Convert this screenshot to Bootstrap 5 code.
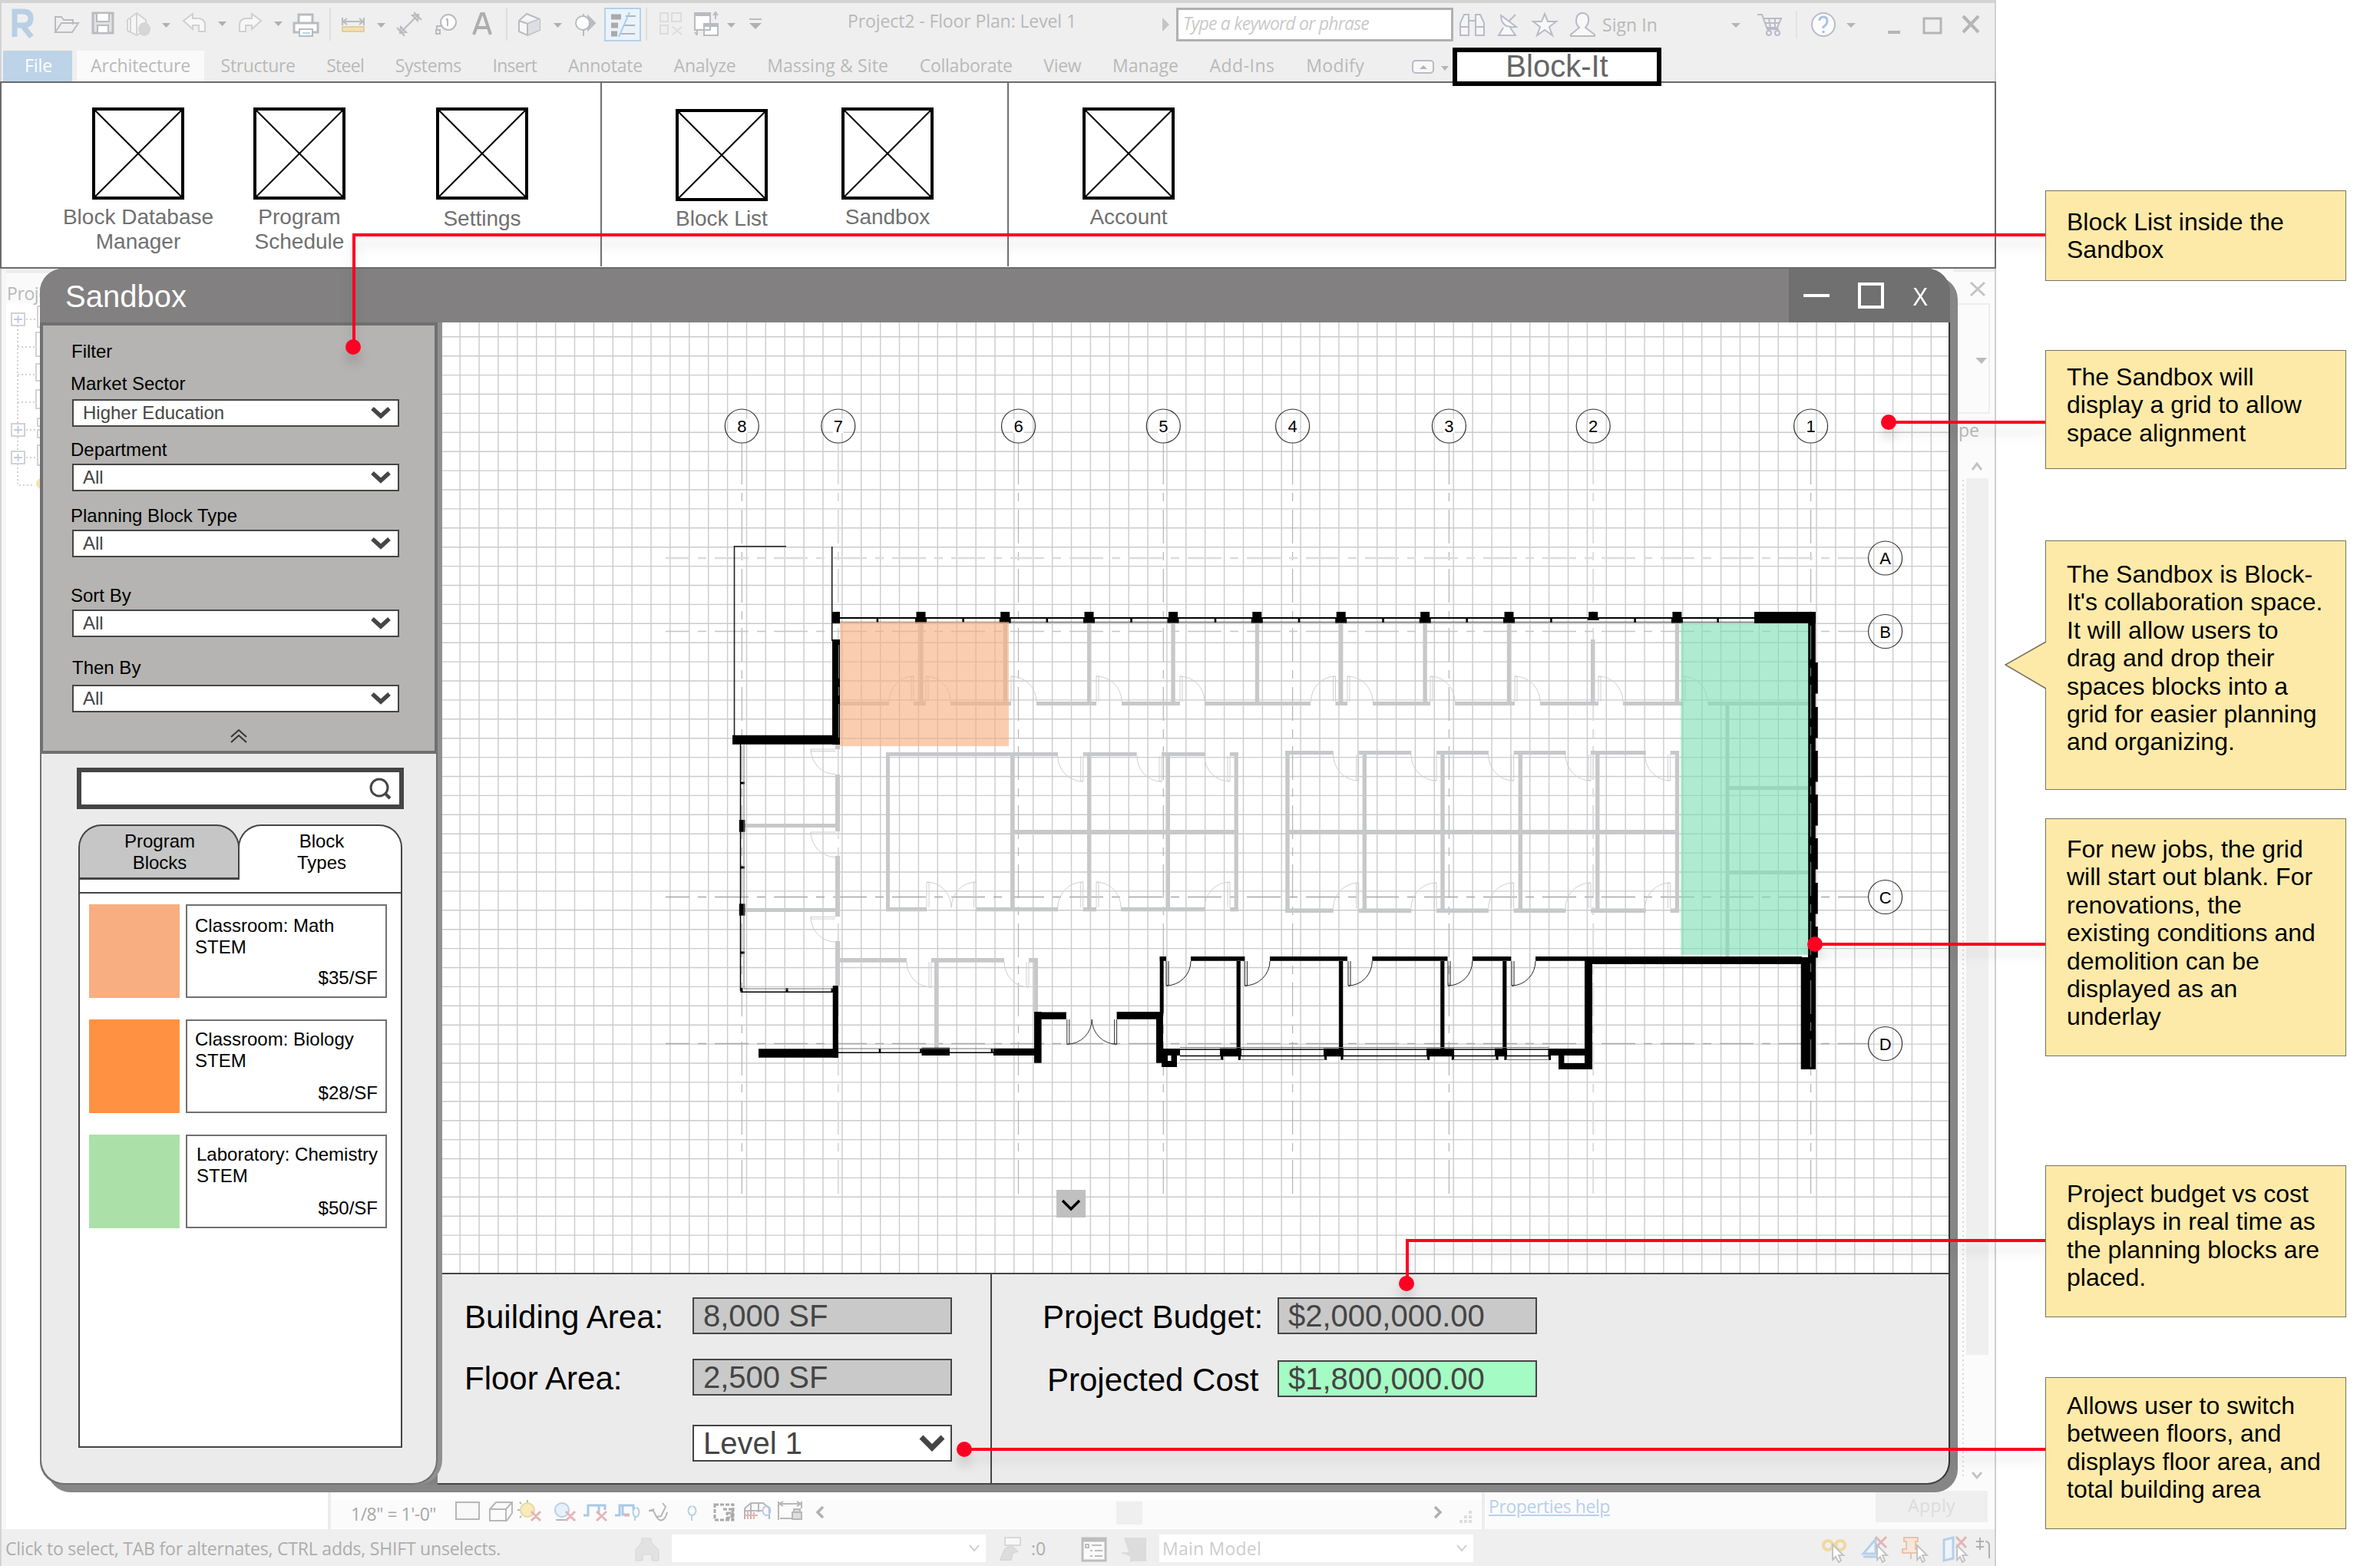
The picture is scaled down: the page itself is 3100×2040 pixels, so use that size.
<!DOCTYPE html>
<html lang="en">
<head>
<meta charset="utf-8">
<title>Block-It Sandbox</title>
<link href="https://cdn.jsdelivr.net/npm/bootstrap@5.3.0/dist/css/bootstrap.min.css" rel="stylesheet">
<script src="https://cdn.jsdelivr.net/npm/bootstrap@5.3.0/dist/js/bootstrap.bundle.min.js"></script>
<style>
  html, body { margin: 0; background: #fff; }
  body { font-family: "Liberation Sans", Arial, sans-serif; color: #000; overflow: hidden; }
  svg { display: block; flex: none; }
  .stage { width: 3100px; height: 2040px; overflow: hidden; }
  .host { width: 2600px; height: 2040px; background: #efefef; border-top: 4px solid #d3d3d3; border-left: 2px solid #d3d3d3; border-right: 2px solid #cfcfcf; font-family: "Open Sans", "Noto Sans", sans-serif; color: #b9b9b9; font-size: 23px; }
  .host .fit { display: block; flex: none; white-space: nowrap; }
  .quick { height: 62px; }
  .help-search { width: 361px; height: 44px; border: 3px solid #b0b0b0; background: #fff; margin: 6px 0 0 9px; padding-left: 6px; color: #cacaca; }
  .tabs-row { height: 40px; gap: 40.6px; padding-left: 2px; }
  .tabs-row .fit { line-height: 38px; height: 40px; }
  .file-tab { width: 90px; background: #bdd3e7; color: #fff; padding-left: 28px; height: 40px; }
  .arch-tab { width: 166px; background: #fafafa; padding-left: 18px; height: 40px; margin-left: 6px; }
  .ribbon { height: 244px; margin-left: -2px; margin-right: -2px; background: #fff; border: 2px solid #6b6b6b; border-top-width: 2px; font-family: "Liberation Sans", Arial, sans-serif; font-size: 28px; line-height: 32px; color: #707070; text-align: center; }
  .panel-group { border-right: 2px solid #707070; height: 239px; }
  .tool { width: 210px; padding-top: 32px; flex: none; }
  .tool svg { margin: 0 auto 7px; }
  .tool.low { padding-top: 34px; }
  .tool.label-low svg { margin-bottom: 9px; }
  .browser { width: 429px; background: #fff; border-left: 6px solid #f7f7f7; border-right: 4px solid #ececec; }
  .browser-head { height: 45px; background: #fafafa; padding: 10px 0 0 1px; border-top: 6px solid #ededed; line-height: 32px; letter-spacing: -.4px; }
  .view-bar { height: 36px; margin-bottom: 2px; background: #fbfbfb; color: #a8a8a8; }
  .props { width: 668px; background: #fbfbfb; border-left: 4px solid #ededed; }
  .apply-btn { width: 146px; height: 41px; background: #efefef; color: #dcdcdc; line-height: 39px; padding-left: 42px; }
  .status { height: 48px; color: #adadad; padding-top: 2px; }
  .status-input { height: 36px; background: #fff; color: #cdcdcd; }

  .brand-tab { left: 1892px; top: 62px; width: 272px; height: 50px; border: 6px solid #000; background: #fff; color: #666; font-size: 40px; line-height: 37px; }
  .win { left: 52px; top: 350px; width: 2488px; height: 1584px; border-radius: 30px; box-shadow: 10px 10px 0 #868686; background: #828080; }
  .win-title { height: 70px; background: #828080; color: #fff; font-size: 40px; line-height: 62px; padding-left: 33px; border-radius: 30px 30px 0 0; overflow: hidden; }
  .win-btns { width: 210px; height: 70px; background: #707070; font-size: 34px; }
  .win-x { width: 60px; padding-left: 17px; padding-top: 2px; font-size: 34px; line-height: 68px; }
  .win-x span { display: inline-block; transform: scaleX(.88); }
  .side { width: 518px; background: #ebebeb; border: 2px solid #707070; border-top: 0; border-radius: 0 0 32px 32px; box-shadow: 6px 0 0 #909090; z-index: 2; }
  .filters { height: 562px; margin: 0 -2px; background: #b5b4b2; border: 4px solid #707070; padding: 20px 0 0 38px; font-size: 24px; line-height: 28px; }
  .filters .lbl { height: 28px; margin-left: -2px; }
  .pick { width: 426px; height: 36px; border: 2px solid #454545; background: #fff; color: #454545; padding: 0 9px 0 12px; font-size: 24px; }
  .find { width: 426px; height: 54px; border: 6px solid #454545; background: #fff; margin: 18px 0 0 46px; }
  .lib { width: 422px; height: 812px; margin: 20px 0 0 48px; font-size: 24px; line-height: 28px; }
  .lib-tab { height: 72px; text-align: center; border: 2px solid #454545; border-radius: 30px 30px 0 0; padding: 6px 0 0 2px; }
  .lib-tab.off { width: 210px; background: #c6c6c6; border-bottom-width: 3px; }
  .lib-tab.on { width: 214px; margin-left: -2px; background: #fff; border-bottom: 0; padding-left: 4px; }
  .lib-tabs { background: linear-gradient(#ebebeb 36px, #fff 36px); }
  .lib-gap { height: 18px; border: 2px solid #454545; border-top: 0; background: #fff; }
  .lib-body { flex: 1; background: #fff; border: 2px solid #454545; border-top: 0; padding: 14px 0 0 12px; }
  .block-row { height: 122px; margin-bottom: 28px; gap: 8px; }
  .swatch { width: 118px; height: 122px; }
  .block-info { width: 262px; height: 122px; border: 2px solid #707070; padding: 10px 10px 0 10px; white-space: nowrap; }
  .block-info .price { text-align: right; margin-top: 14px; }
  .block-row:first-child .block-info { padding-top: 12px; }
  .block-row:first-child .price { margin-top: 12px; }
  .block-row:last-child .nm { padding-left: 2px; }
  .work { width: 1970px; height: 1514px; border-right: 2px solid #333; border-bottom: 2px solid #454545; border-radius: 0 0 30px 0; overflow: hidden; background: #ebebeb; }
  .plan { width: 1968px; height: 1238px; background: #fff; }
  .totals { height: 274px; border-top: 2px solid #454545; font-size: 42px; }
  .totals-left { width: 722px; border-right: 2px solid #454545; padding: 30px 0 0 35px; }
  .totals-right { padding: 30px 0 0 66px; }
  .field { height: 48px; width: 338px; border: 2px solid #454545; background: #c9c9c9; color: #454545; font-size: 40px; line-height: 44px; padding: 0 7px 0 12px; }
  .row-a { height: 48px; line-height: 52px; white-space: nowrap; }
  .notes { width: 392px; left: 2664px; top: 248px; font-size: 32px; line-height: 36.4px; }
  .note { width: 392px; background: #feeaa8; border: 1.5px solid #77735f; padding-left: 27px; white-space: nowrap; }
  .links { left: 0; top: 0; filter: drop-shadow(0 12px 7px rgba(0,0,0,.13)); pointer-events: none; z-index: 5; }
  .tip { left: -54px; top: 129px; }
</style>
</head>
<body>
<div class="stage position-relative">

  <!-- Host CAD application, dimmed -->
  <div class="host d-flex flex-column">
    <div class="quick d-flex align-items-start">
      <svg width="1000" height="60" viewBox="2 4 1000 60" fill="none" stroke="#b9bbc0" stroke-width="2">
        <path d="M19 48V15h11q10 0 10 9t-10 9H20M29 33l12 15" stroke="#b9cfe6" stroke-width="7"/>
        <path d="M72 42V22h8l3 4h12v6M72 42l8-12h22l-8 12z"/>
        <path d="M121 17h26v26h-26z" fill="#e0e1e4" stroke-width="3"/><path d="M126 17h16v11h-16zM127 33h14v10h-14z" fill="#fff"/>
        <path d="M166 26l12-9 12 9v14l-12 6-12-6zM170 24v18M178 17v28" fill="#f6f6f6" stroke="#d2d3d6"/><ellipse cx="188" cy="38" rx="8" ry="9" fill="#d5d5d5" stroke="none"/>
        <path d="M239 27l12-9v6h9q7 2 7 8v9h-8v-8h-8v5z" stroke="#d0d0d0" fill="#f7f7f7"/>
        <path d="M340 27l-12-9v6h-9q-7 2-7 8v9h8v-8h8v5z" stroke="#d0d0d0" fill="#f7f7f7"/>
        <path d="M389 30V19h18v11M383 30h31v12h-31z" fill="#fff" stroke-width="3"/><path d="M390 38h17v9h-17z" fill="#fff" stroke-width="2"/><path d="M394 43h10" stroke="#bcd4ea"/>
        <path d="M430 10v43M660 10v43M842 10v43" stroke="#dedede"/>
        <path d="M446 23v10M474 23v10M447 28h26M452 24l-5 4 5 4M468 24l5 4-5 4"/><path d="M446 35h28v6h-28z" fill="#f3dfae" stroke="#dfcf9f"/>
        <path d="M521 43l24-24M517 36l10 11M539 16l10 10M521 43l1-8 7 7zM545 19l-1 8-7-7z"/>
        <circle cx="584" cy="29" r="10" fill="#fff"/><path d="M575 34h-6v5M568 39h5v5h-5zM583 25v9M581 26l2-2" />
        <path d="M617 45l10-27h3l9 27M621 36h15" stroke="#adadad" stroke-width="4"/>
        <path d="M676 27l10-9 17 7v14l-16 7-11-5zM676 27l11 4 16-6M687 31v15" fill="#f7f7f8"/><path d="M688 31l15-6v14l-15 6z" fill="#dddee2" stroke="none"/>
        <path d="M760 18v29M775 30l-9-9v18z" fill="#b9bbc0"/><circle cx="759" cy="30" r="9" fill="#fff"/>
        <path d="M788 11h46v42h-46z" fill="#eaf3fb" stroke="#b5d0ea"/><path d="M796 22h13M796 33h9M796 44h8" stroke="#aaa" stroke-width="7"/><path d="M815 21h13M812 33h15M808 44h19" stroke="#b5b5b5"/><path d="M820 16l-14 32" stroke="#aacdf0"/>
        <path d="M860 17h10v11h-10zM875 17h12v11h-12zM860 33h10v11h-10zM876 35l12 10M888 35l-12 10" stroke="#dcdcdc"/>
        <path d="M905 17h20v22h-20zM917 31h18v15h-18z" fill="#fff"/><path d="M905 19h20M917 33h18" stroke-width="4"/><path d="M932 16v9M929 20l3-4 3 4M908 45v-6M905 42l3 4"/>
        <path d="M976 25h16"/>
        <path d="M211 30h11l-5.500 6zM284 28h11l-5.500 6zM357 28h11l-5.500 6zM491 30h11l-5.500 6zM721 30h11l-5.500 6zM947 30h11l-5.500 6zM976 30h16l-8 8z" fill="#b0b0b0" stroke="none"/>
      </svg>
      <span class="fit" data-w="298" style="margin:6px 0 0 102px">Project2 - Floor Plan: Level 1</span>
      <svg width="9" height="18" style="margin:19px 0 0 112px"><path d="M0 0l9 9-9 9z" fill="#c4c4c4"/></svg>
      <div class="help-search fst-italic"><span class="fit" data-w="242">Type a keyword or phrase</span></div>
      <svg width="186" height="60" viewBox="1896 4 186 60" style="margin-left:3px" fill="none" stroke="#b9bbc4" stroke-width="2">
        <path d="M1902 46v-16l5-11h6v27zM1933 46v-16l-5-11h-6v27zM1913 27h9M1902 35h11M1922 35h11" fill="#f5f5f7"/>
        <path d="M1955 20q0 17 20 15zM1965 28l9-9M1958 36l-6 10h22l-7-10" fill="#f8f8f9"/>
        <path d="M2012 18l4 10h11l-9 7 4 11-10-7-10 7 4-11-9-7h11z" fill="#f8f8f8"/>
        <path d="M2061 17c7 0 9 6 8 11s-3 6-4 8l12 9v2h-31v-2l11-9c-2-2-4-4-4-8s1-11 8-11z" fill="#f8f8f9"/>
      </svg>
      <span class="fit" data-w="72" style="margin:11px 0 0 5px">Sign In</span>
      <svg width="430" height="60" viewBox="2160 4 430 60" fill="none" stroke="#b9bbc8" stroke-width="2">
        <path d="M2256 30h12l-6 6zM2406 30h12l-6 6z" fill="#b5b5b5" stroke="none"/>
        <path d="M2290 19h6l7 19h15M2297 24h24l-5 12h-15M2305 24l2 12M2313 24v12M2299 30h20"/><circle cx="2305" cy="43" r="3"/><circle cx="2316" cy="43" r="3"/>
        <path d="M2341 14v36" stroke="#e2e2e2"/>
        <circle cx="2376" cy="32" r="15" fill="#fbfbfb"/><path d="M2371 27q0-5 5-5t5 5-5 8v2M2376 40v3" stroke="#a9c1e4" stroke-width="3"/>
        <path d="M2460 42h16" stroke="#b5b5b5" stroke-width="4"/><path d="M2507 24h22v19h-22zM2507 24h22" stroke="#b5b5b5" stroke-width="3"/>
        <path d="M2558 21l20 21M2578 21l-20 21" stroke="#b5b5b5" stroke-width="4"/>
      </svg>
    </div>

    <div class="tabs-row d-flex">
      <div class="d-flex">
        <div class="file-tab"><span class="fit" data-w="36">File</span></div>
        <div class="arch-tab"><span class="fit" data-w="130">Architecture</span></div>
      </div>
      <span class="fit" data-w="97" style="margin-left:-19px">Structure</span>
      <span class="fit" data-w="49">Steel</span>
      <span class="fit" data-w="86">Systems</span>
      <span class="fit" data-w="58">Insert</span>
      <span class="fit" data-w="97">Annotate</span>
      <span class="fit" data-w="81">Analyze</span>
      <span class="fit" data-w="158">Massing &amp; Site</span>
      <span class="fit" data-w="121">Collaborate</span>
      <span class="fit" data-w="49">View</span>
      <span class="fit" data-w="86">Manage</span>
      <span class="fit" data-w="85">Add-Ins</span>
      <span class="fit" data-w="76">Modify</span>
      <svg width="50" height="40" style="margin-left:20px" fill="none" stroke="#b9bbc4" stroke-width="2"><rect x="2" y="13" width="27" height="16" rx="4" fill="#f8f8f8"/><path d="M11 24l5-5 5 5zM39 20h10l-5 6z" fill="#b5b5b5" stroke="none"/></svg>
    </div>

    <div class="ribbon d-flex">
      <div class="panel-group d-flex" style="width:782px">
        <div class="tool" style="margin-left:73px"><svg class="xbox" width="120" height="120"></svg>Block Database<br>Manager</div>
        <div class="tool"><svg class="xbox" width="120" height="120"></svg>Program<br>Schedule</div>
        <div class="tool label-low" style="margin-left:28px"><svg class="xbox" width="120" height="120"></svg>Settings</div>
      </div>
      <div class="panel-group d-flex" style="width:530px">
        <div class="tool low" style="margin-left:51px"><svg class="xbox" width="120" height="120"></svg>Block List</div>
        <div class="tool" style="margin-left:6px"><svg class="xbox" width="120" height="120"></svg>Sandbox</div>
      </div>
      <div class="tool" style="margin-left:51px"><svg class="xbox" width="120" height="120"></svg>Account</div>
    </div>

    <div class="d-flex flex-grow-1" style="min-height:0">
      <div class="browser flex-shrink-0">
        <div class="browser-head">Project</div>
        <svg width="60" height="260" viewBox="8 395 60 260" fill="none" stroke="#d2d2d2" stroke-width="2">
          <path d="M23 424v208h22M34 416h14M23 452h24M23 488h24M23 524h24M34 560h14M34 596h14" stroke-dasharray="2 3"/>
          <path d="M15 408h17v16H15zM15 552h17v16H15zM15 588h17v16H15z" fill="#fff"/><path d="M18 416h11M23.500 411v10M18 560h11M23.500 555v10M18 596h11M23.500 591v10" stroke="#c3cbe2"/>
          <path d="M60 399H49v27h11M60 433H47v31h13M60 474H47v22h13M60 508H47v24h13M60 545H49v10h11M60 560H49v10h11M60 580H49v26h11"/><circle cx="54" cy="630" r="7" fill="#f3e3b0" stroke="none"/>
        </svg>
      </div>
      <div class="d-flex flex-column justify-content-end flex-grow-1 bg-white">
        <div class="view-bar d-flex">
          <span class="fit" data-w="111" style="margin:1px 0 0 26px">1/8" = 1'-0"</span>
          <svg width="1350" height="36" viewBox="570 1954 1350 36" style="margin-left:2px" fill="none" stroke="#b7b7b7" stroke-width="2">
            <path d="M594 1957h30v22h-30z" fill="#f8f8f8"/><path d="M638 1966l8-9h21v14l-7 10h-22zM638 1966h21v15M659 1966l8-9"/>
            <circle cx="687" cy="1967" r="9" fill="#f9eab8" stroke="#e6d7a4"/><path d="M687 1953v4M674 1967h3M677 1957l2 2M677 1977l2-2"/>
            <circle cx="732" cy="1967" r="9" fill="#e6f1fb" stroke="#b5cfe8"/><path d="M724 1980h14"/>
            <path d="M760 1974h6v-13h22v6M766 1961h14v12" stroke="#a9c9e6" stroke-width="3"/><path d="M801 1974h6v-13h18v6M811 1961v12h9" stroke="#a9c9e6" stroke-width="3"/>
            <path d="M692 1969l12 12M704 1969l-12 12M737 1969l12 12M749 1969l-12 12M777 1969l13 12M790 1969l-13 12M813 1974h7" stroke="#e6b4b4" stroke-width="3"/><path d="M827 1975v6M828 1964a4 6 0 1 0 1 0M901 1962a5 6 0 1 0 1 0M901 1975v6" stroke="#b5cfe8"/>
            <path d="M845 1968h6l4 8 6-1 6-12-4-5M852 1966l-6 2M855 1976q4 6 8 4t6-10" />
            <path d="M931 1960h24v20h-24zM942 1966h12v14M947 1971h6v6h-6z" stroke="#aaa" stroke-dasharray="5 2" stroke-width="3"/>
            <path d="M970 1979v-14l8-7h16l8 7v14M970 1968h24M978 1958v21M988 1958v12"/><path d="M971 1974h16M974 1967v12M982 1970v9" stroke="#e6b4b4"/><path d="M998 1962a5 6 0 1 0 1 0" stroke="#b5cfe8"/>
            <path d="M1014 1956v24M1044 1956v9M1014 1959h30M1020 1956l-5 3 5 3M1038 1956l5 3-5 3M1016 1978h16" /><path d="M1032 1970h12v9h-12zM1034 1970v-4h8v4" fill="#ddd"/>
            <path d="M1072 1963l-7 7 7 7M1869 1963l7 7-7 7" stroke="#b0b0b0" stroke-width="3.500"/>
            <path d="M1454 1956h34v30h-34z" fill="#efefef" stroke="none"/><path d="M1901 1982h16M1907 1976h10M1913 1970h4" stroke="#ddd" stroke-width="4" stroke-dasharray="4 2"/>
          </svg>
        </div>
      </div>
      <div class="props flex-shrink-0 d-flex flex-column justify-content-end">
        <div class="d-flex justify-content-end flex-grow-1">
          <svg width="54" height="1592" viewBox="2544 350 54 1592" fill="none" stroke="#c4c4c4" stroke-width="2">
            <path d="M2544 352h54" stroke="#ececec" stroke-width="4"/><path d="M2544 396h47v142h-47" stroke="#eee"/>
            <path d="M2567 368l18 17M2585 368l-18 17" stroke-width="3"/><path d="M2573 466h15l-7 8z" fill="#bbb" stroke="none"/>
            <path d="M2561 623h29v1142h-29z" fill="#efefef" stroke="none"/><path d="M2569 612l6-8 6 8M2569 1918l6 7 6-7" stroke-width="3"/>
            <path d="M2557 625v1300" stroke="#d8d8d8" stroke-dasharray="2 4"/>
            <text x="2551" y="569" font-size="23" fill="#b9b9b9" stroke="none">pe</text>
          </svg>
        </div>
        <div class="d-flex justify-content-between" style="height:50px;padding-right:9px">
          <span class="fit text-decoration-underline" data-w="158" style="margin:3px 0 0 5px;color:#b9d0ea;line-height:34px">Properties help</span>
          <div class="apply-btn"><span class="fit" data-w="62">Apply</span></div>
        </div>
      </div>
    </div>

    <div class="status d-flex align-items-center">
      <span class="fit" data-w="645" style="margin-left:5px">Click to select, TAB for alternates, CTRL adds, SHIFT unselects.</span>
      <svg width="48" height="48" viewBox="820 1993 48 48" style="margin-left:168px" fill="#e2e2e2" stroke="#d5d5d5"><path d="M828 2033v-14l8-10v-5h12v5l10 10v14h-9v-8h-12v8z"/></svg>
      <div class="status-input d-flex justify-content-end align-items-center" style="width:409px;margin-left:7px;padding-right:7px"><svg width="16" height="12" fill="none" stroke="#d0d0d0" stroke-width="2"><path d="M2 2l6 7 6-7"/></svg></div>
      <svg width="36" height="48" viewBox="1296 1993 36 48" style="margin-left:12px" fill="none" stroke="#d8d8d8" stroke-width="2"><path d="M1309 2003h20v10h-20z" fill="#f8f8f8"/><path d="M1317 2013l8 8-6 2-2 9h-14l6-14z" fill="#ddd"/></svg>
      <span class="fit" data-w="19" style="margin-left:11px">:0</span>
      <svg width="140" height="48" viewBox="1364 1993 140 48" style="margin-left:3px" fill="none" stroke="#bdbdbd" stroke-width="2"><path d="M1409 2004h30v29h-30z" fill="#fafafa" stroke-width="3"/><path d="M1409 2006h30" stroke-width="5"/><path d="M1413 2012h4v4h-4zM1421 2013h13M1419 2020h3M1425 2020h10M1419 2027h3M1425 2027h10"/><path d="M1463 2004h28v29h-18M1460 2023h12v-6l8 8-8 8v-5" fill="#dcdcdc" stroke="#dcdcdc"/></svg>
      <div class="status-input d-flex justify-content-between align-items-center" style="width:409px;margin-left:5px;padding:0 7px 0 4px"><span class="fit" data-w="129">Main Model</span><svg width="16" height="12" fill="none" stroke="#d0d0d0" stroke-width="2"><path d="M2 2l6 7 6-7"/></svg></div>
      <svg class="ms-auto" width="228" height="48" viewBox="2370 1993 228 48" fill="none" stroke="#c3c3c3" stroke-width="2">
        <path d="M2381 2007a6 6 0 1 0 .1 0M2397 2007a6 6 0 1 0 .1 0M2385 2012h9" stroke="#eed9a0" stroke-width="4"/>
        <path d="M2427 2024l16-19v19zM2427 2028h20M2532 2006l12-3v27l-12 3z" stroke="#b5d0ea" fill="#edf4fa" stroke-width="3"/>
        <path d="M2480 2003h18v5h-3v10h5v5h-22v-5h5v-10h-3zM2489 2023v8" stroke="#e9c3ad" fill="#f8e6da"/>
        <path d="M2443 2002l14 14M2457 2002l-14 14M2548 2002l13 14M2561 2002l-13 14" stroke="#e6b4b4" stroke-width="3"/>
        <path d="M2387 2012v20l4-4 4 7 3-2-3-7h6zM2445 2013v19l4-4 3 7 3-2-3-7h6zM2497 2013v19l4-4 3 7 3-2-3-7h6zM2549 2013v19l4-4 3 7 3-2-3-7h6z" fill="#fff"/>
        <path d="M2574 2008h10M2579 2003v16M2574 2015h10M2586 2008q5 0 5 6v16" stroke="#b0b0b0"/>
      </svg>
    </div>
  </div>

  <div class="brand-tab position-absolute text-center">Block-It</div>

  <!-- Sandbox window -->
  <div class="win position-absolute d-flex flex-column">
    <div class="win-title d-flex align-items-center justify-content-between">
      <span style="padding-top:2px">Sandbox</span>
      <div class="win-btns d-flex align-items-center">
        <svg width="128" height="70" fill="none" stroke="#fff" stroke-width="4"><path d="M19 35h34M92 20h30v30H92z"/></svg>
        <div class="win-x flex-shrink-0" style="margin-left:15px"><span>X</span></div>
      </div>
    </div>
    <div class="d-flex position-relative" style="height:1514px">
      <div class="side d-flex flex-column flex-shrink-0">
        <div class="filters">
          <div class="lbl" style="margin-left:-1px">Filter</div>
          <div class="lbl" style="margin-top:14px">Market Sector</div>
          <div class="pick d-flex align-items-center justify-content-between" style="margin-top:6px">Higher Education<svg class="chev" width="26" height="18"></svg></div>
          <div class="lbl" style="margin-top:16px">Department</div>
          <div class="pick d-flex align-items-center justify-content-between" style="margin-top:4px">All<svg class="chev" width="26" height="18"></svg></div>
          <div class="lbl" style="margin-top:18px">Planning Block Type</div>
          <div class="pick d-flex align-items-center justify-content-between" style="margin-top:4px">All<svg class="chev" width="26" height="18"></svg></div>
          <div class="lbl" style="margin-top:36px">Sort By</div>
          <div class="pick d-flex align-items-center justify-content-between" style="margin-top:4px">All<svg class="chev" width="26" height="18"></svg></div>
          <div class="lbl" style="margin:26px 0 0">Then By</div>
          <div class="pick d-flex align-items-center justify-content-between" style="margin-top:8px">All<svg class="chev" width="26" height="18"></svg></div>
          <svg width="22" height="19" style="margin:21px 0 0 206px" fill="none" stroke="#333" stroke-width="2"><path d="M1 11l10-9 10 9M1 18l10-9 10 9"/></svg>
        </div>
        <div class="find d-flex align-items-center justify-content-end" style="padding-right:10px">
          <svg width="30" height="30" fill="none" stroke="#454545" stroke-width="3"><circle cx="14" cy="14" r="11"/><path d="M21 21l7 7" stroke-width="4"/></svg>
        </div>
        <div class="lib d-flex flex-column">
          <div class="lib-tabs d-flex">
            <div class="lib-tab off">Program<br>Blocks</div>
            <div class="lib-tab on">Block<br>Types</div>
          </div>
          <div class="lib-gap"></div>
          <div class="lib-body">
            <div class="block-row d-flex"><div class="swatch" style="background:#f8ae80"></div><div class="block-info"><div class="nm">Classroom: Math<br>STEM</div><div class="price">$35/SF</div></div></div>
            <div class="block-row d-flex"><div class="swatch" style="background:#ff9143"></div><div class="block-info"><div class="nm">Classroom: Biology<br>STEM</div><div class="price">$28/SF</div></div></div>
            <div class="block-row d-flex"><div class="swatch" style="background:#abe1a9"></div><div class="block-info"><div class="nm">Laboratory: Chemistry<br>STEM</div><div class="price">$50/SF</div></div></div>
          </div>
        </div>
      </div>

      <div class="work flex-shrink-0">
        <svg class="plan" id="plan" viewBox="570 420 1968 1238"></svg>
        <div class="totals d-flex">
          <div class="totals-left">
            <div class="row-a d-flex justify-content-between" style="padding-right:50px"><span>Building Area:</span><div class="field">8,000 SF</div></div>
            <div class="row-a d-flex justify-content-between" style="padding-right:50px;margin-top:32px"><span>Floor Area:</span><div class="field">2,500 SF</div></div>
            <div class="row-a d-flex justify-content-end" style="padding-right:50px;margin-top:38px"><div class="field bg-white d-flex align-items-center justify-content-between">Level 1<svg width="34" height="24" fill="none" stroke="#454545" stroke-width="7"><path d="M3 4l14 14L31 4"/></svg></div></div>
          </div>
          <div class="totals-right">
            <div class="row-a d-flex" style="gap:20px"><span style="width:286px">Project Budget:</span><div class="field">$2,000,000.00</div></div>
            <div class="row-a d-flex" style="margin-top:34px;gap:20px"><span style="width:280px;margin-left:6px">Projected Cost</span><div class="field" style="background:#a4fbc3">$1,800,000.00</div></div>
          </div>
        </div>
      </div>
    </div>
  </div>

  <!-- Annotation notes -->
  <div class="notes position-absolute d-flex flex-column">
    <div class="note" style="height:118px;padding-top:22px">Block List inside the<br>Sandbox</div>
    <div class="note" style="height:155px;margin-top:90px;padding-top:16px">The Sandbox will<br>display a grid to allow<br>space alignment</div>
    <div class="note position-relative" style="height:325px;margin-top:93px;padding-top:25px">
      <svg class="tip position-absolute" width="55" height="66"><path d="M54 2L1 32l53 31" fill="#feeaa8" stroke="#77735f" stroke-width="1.500"/></svg>
      The Sandbox is Block-<br>It's collaboration space.<br>It will allow users to<br>drag and drop their<br>spaces blocks into a<br>grid for easier planning<br>and organizing.</div>
    <div class="note" style="height:310px;margin-top:37px;padding-top:21px">For new jobs, the grid<br>will start out blank. For<br>renovations, the<br>existing conditions and<br>demolition can be<br>displayed as an<br>underlay</div>
    <div class="note" style="height:198px;margin-top:142px;padding-top:18px">Project budget vs cost<br>displays in real time as<br>the planning blocks are<br>placed.</div>
    <div class="note" style="height:198px;margin-top:78px;padding-top:18px">Allows user to switch<br>between floors, and<br>displays floor area, and<br>total building area</div>
  </div>

  <!-- Connectors from notes to the interface -->
  <svg class="links position-absolute" width="2664" height="2040" fill="none" stroke="#ff0022" stroke-width="4">
    <path d="M2664 306H461V452M2664 550H2460M2664 1230H2364M2664 1616H1833V1672M2664 1888H1256"/>
    <g fill="#ff0022" stroke="none"><circle cx="460" cy="452" r="10"/><circle cx="2460" cy="550" r="10"/><circle cx="2364" cy="1230" r="10"/><circle cx="1832" cy="1672" r="10"/><circle cx="1256" cy="1888" r="10"/></g>
  </svg>
</div>

<script>
// Tighten or loosen host labels to their column widths
document.querySelectorAll('.fit').forEach(function (el) {
  var w = +el.dataset.w, n = el.textContent.length;
  el.style.display = 'inline-block';
  var nat = el.getBoundingClientRect().width;
  el.style.letterSpacing = ((w - nat) / n) + 'px';
  el.style.display = '';
});
document.querySelectorAll('.xbox').forEach(function (s) {
  s.innerHTML = '<path d="M2 2h116v116H2z" fill="#fff" stroke="#000" stroke-width="4"/><path d="M4 4l112 112M116 4L4 116" stroke="#000" stroke-width="2"/>';
});
document.querySelectorAll('.chev').forEach(function (s) {
  s.innerHTML = '<path d="M2 3l11 10L24 3" fill="none" stroke="#454545" stroke-width="5.500"/>';
});

// Floor plan
var out = '';
function P(d, c, w, extra) { out += '<path d="' + d + '" fill="none" stroke="' + c + '" stroke-width="' + w + '" ' + (extra || '') + '/>'; }
function R(list, c) { out += '<path fill="' + c + '" d="' + list.map(function (r) { return 'M' + r[0] + ' ' + r[1] + 'H' + r[2] + 'V' + r[3] + 'H' + r[0] + 'z'; }).join('') + '"/>'; }
var i, d = '';
for (i = 0; i < 79; i++) d += 'M' + (574.3 + i * 24.885).toFixed(1) + ' 420V1658';
for (i = 0; i < 50; i++) d += 'M570 ' + (438.8 + i * 24.9).toFixed(1) + 'H2538';
P(d, '#cbcbcb', 1.4);

var cols = [[966.3, 8], [1091.8, 7], [1326.5, 6], [1515.3, 5], [1683.6, 4], [1887.4, 3], [2075.2, 2], [2358.6, 1]];
var rows = [[727, 'A'], [822.5, 'B'], [1168.5, 'C'], [1359.5, 'D']];
function axes() {
  cols.forEach(function (c) {
    var pale = c[1] == 7 || c[1] == 2;
    P('M' + c[0] + ' 577V631M' + c[0] + ' 642V653', pale ? '#dcdcdc' : '#b4b4b4', pale ? 2 : 1.2);
    P('M' + c[0] + ' 664V1561', pale ? '#dcdcdc' : '#b4b4b4', pale ? 2 : 1.2, 'stroke-dasharray="44 11 11 11"');
  });
  rows.forEach(function (r, k) {
    P('M2433 ' + r[0] + 'H867', ['#dcdcdc', '#c4c4c4', '#a8a8a8', '#a8a8a8'][k], k ? 1.3 : 2.4, 'stroke-dasharray="44 11 11 11" stroke-dashoffset="5"');
  });
}
axes();
function bubble(x, y, t) {
  out += '<circle cx="' + x + '" cy="' + y + '" r="22" fill="none" stroke="#333" stroke-width="1.2"/><rect x="' + (x - 7) + '" y="' + (y - 9) + '" width="14" height="18" fill="#fff"/><text x="' + x + '" y="' + (y + 8) + '" font-size="22" text-anchor="middle">' + t + '</text>';
}
cols.forEach(function (c) { bubble(c[0], 555, c[1]); });
rows.forEach(function (r) { bubble(2455.6, r[0], r[1]); });

// Existing partitions
var g = '#c7c8ca', w = [];
[1200, 1309.3, 1418.7, 1528, 1637.5, 1746.7, 1856.1, 1965.5, 2184.5].forEach(function (x) { w.push([x - 2.7, 811, x + 2.7, 919]); });
w.push([2072, 833, 2077.5, 919]);
[[1093, 1158], [1190, 1206], [1238, 1317], [1350, 1428], [1461, 1537], [1569, 1707], [1739.5, 1755], [1788, 1863], [1895, 1973], [2006, 2082], [2114, 2192], [2224.5, 2357]].forEach(function (s) { w.push([s[0], 914, s[1], 919]); });
w.push([1088, 970, 1094, 976], [1088, 1009, 1094, 1083], [1088, 1115, 1094, 1194], [1088, 1226, 1094, 1284], [970, 1073, 1089, 1078], [970, 1183, 1089, 1188]);
w.push([1154, 980, 1159, 1187], [1316, 980, 1321.4, 1187], [1416, 980, 1421.4, 1187], [1518.4, 980, 1524, 1187], [1607.6, 980, 1612.8, 1187], [1318, 1081, 1612.8, 1086.3]);
[[1154, 1378], [1410.7, 1480.6], [1513, 1569.4], [1602, 1612.8]].forEach(function (s) { w.push([s[0], 980, s[1], 985]); });
[[1154, 1207], [1271.4, 1378], [1410.7, 1428], [1460, 1569.4], [1602, 1612.8]].forEach(function (s) { w.push([s[0], 1182, s[1], 1187.3]); });
[1677, 1777.3, 1879, 1980.3, 2080.8, 2184.5].forEach(function (x) { w.push([x - 2.7, 978, x + 2.7, 1189]); });
[[1674, 1736.8], [1769.7, 1838.3], [1871, 1939], [1971.6, 2039.6], [2072, 2143.8], [2175.6, 2187]].forEach(function (s) { w.push([s[0], 978, s[1], 983], [s[0], 1183.5, s[1], 1189]); });
w.push([1677, 1081, 2187, 1086.3], [2247.5, 919, 2252.4, 1248], [2252, 1024, 2357, 1029], [2252, 1134, 2357, 1139]);
w.push([1093, 1248, 1181, 1253.7], [1213, 1248, 1308, 1253.7], [1340, 1248, 1352, 1253.7], [1217, 1250, 1222.7, 1366], [1346.4, 1248, 1352, 1320]);
w.forEach(function (r) { R([r], g); });

// Door: hinge point, swing width, leaf length
function door(x, y, dx, dy, c) {
  P('M' + x + ' ' + y + 'v' + dy + 'h' + (dx > 0 ? 3 : -3) + 'v' + (-dy), c, 1);
  P('M' + x + ' ' + (y + dy) + 'A' + Math.abs(dx) + ' ' + Math.abs(dy) + ' 0 0 ' + ((dx > 0) == (dy < 0) ? 1 : 0) + ' ' + (x + dx) + ' ' + y, c, 1);
}
var dg = '#cfcfcf';
[[1190, -32], [1206, 32], [1317, 33], [1428, 33], [1537, 32], [1739.5, -32], [1755, 33], [1863, 32], [1973, 33], [2082, 32], [2192, 32]].forEach(function (a) { door(a[0], 914, a[1], -33, dg); });
[[1410.7, -33], [1513, -32], [1602, -33]].forEach(function (a) { door(a[0], 985, a[1], 33, dg); });
[[1410.7, -33], [1428, 32], [1602, -33], [1207, 32], [1271.4, -32]].forEach(function (a) { door(a[0], 1182, a[1], -33, dg); });
[1769.7, 1871, 1971.6, 2072, 2175.6].forEach(function (x) { door(x, 983, -33, 34, dg); door(x, 1183, -33, -33, dg); });
[[1213, -32], [1340, -32]].forEach(function (a) { door(a[0], 1253, a[1], 33, dg); });
[976, 1084, 1194.5].forEach(function (y) { P('M1088 ' + y + 'h-32v2.500h32M1056 ' + y + 'A32 33 0 0 0 1088 ' + (y + 32.5), dg, 1); });

// Exterior shell
var k = '#000';
P('M1094 810.500H2285', '#777', 1.4); P('M1084 805H2285', k, 2);
P('M956.500 958V711.700H1024', '#222', 1.6); P('M1083.700 712V835', '#111', 1.5);
w = [[1084, 797, 1094, 812], [1084, 833, 1094, 970], [954, 957.7, 1094, 969.7], [2285, 797, 2365, 812], [2355, 811, 2364.8, 1250]];
[1199.5, 1309.2, 1418.5, 1528, 1637.3, 1746.7, 1856.2, 1965.5, 2075.2, 2184.4].forEach(function (x) { w.push([x - 6, 797, x + 6, 807], [x - 7.5, 804.5, x + 7.5, x == 2075.2 ? 808 : 811.5]); });
[1142.9, 1254.6, 1363.8, 1473.5, 1583, 1692, 1801.5, 1910.7, 2020.4, 2129.6, 2237.6].forEach(function (x) { w.push([x - 1.3, 805, x + 1.3, 811]); });
[863, 921, 978, 1035, 1092, 1150, 1207].forEach(function (y) { w.push([2362, y, 2367.8, y + 40.5]); });
w.push([2345.7, 1247, 2365, 1393], [2065, 1246, 2347, 1256], [2064, 1246, 2074, 1393], [2016.5, 1366, 2066, 1375], [2030, 1366, 2037.4, 1393], [2030, 1385, 2074, 1393]);
[[1510.7, 1519], [1551, 1621.4], [1654, 1755], [1787.3, 1885.5], [1917.8, 1968.3], [2000, 2074]].forEach(function (s) { w.push([s[0], 1246, s[1], 1251.8]); });
w.push([1510.7, 1246, 1515.6, 1320], [1506, 1318, 1515, 1384.7], [1347, 1318.5, 1388.8, 1327.7], [1347, 1318, 1356.6, 1384.7], [1454.6, 1318, 1515, 1327.7]);
[1613.2, 1746.7, 1878.8, 1959.8].forEach(function (x) { w.push([x - 2.6, 1252, x + 2.6, 1367]); });
w.push([1513, 1366, 1537, 1375], [1513, 1366, 1521, 1390], [1525.5, 1366, 1533, 1390], [1513, 1382, 1533, 1390]);
w.push([1589, 1365.7, 1617, 1375.5], [1724, 1365.7, 1750, 1375.5], [1858, 1365.7, 1894, 1375.5], [1947, 1365.7, 1963, 1375.5]);
[1591.7, 1614.4, 1726.5, 1748, 1860.5, 1892.5, 1950, 1961, 2018.5].forEach(function (x) { w.push([x - 1.6, 1370, x + 1.6, 1381]); });
w.push([1293.9, 1365.7, 1349, 1375], [1200.5, 1364.7, 1237, 1375], [988, 1366.3, 1091.8, 1377.7], [1084.7, 1284, 1091.8, 1377.7]);
[1146, 1199.5, 1292].forEach(function (x) { w.push([x - 1.3, 1366, x + 1.3, 1372]); });
[966, 1025, 1084].forEach(function (x) { w.push([x - 1.5, 1287, x + 1.5, 1293]); });
w.push([962.8, 1068, 970.4, 1083.7], [962.8, 1177.3, 970.4, 1192.7], [964, 1018.5, 970, 1021.5], [964, 1128.5, 970, 1131.5], [964, 1239.5, 970, 1242.5]);
w.forEach(function (r) { R([r], k); });
P('M964.500 969V1291M966 1292.300H1085M1092 1371.300H1300M1537 1367H2018M1537 1375.500H2018', k, 1.5);
P('M969 969V1288H1085M1092 1366H1300M1537 1380.500H1592M1615 1380.500H1727M1748 1380.500H1860M1892 1380.500H1950M1961 1380.500H2018M1537 1364.500H2018', '#777', 1);
[[1519, 1252, 32], [1621.4, 1252, 32.6], [1756, 1252, 31.3], [1886, 1252, 31.8], [1969, 1252, 31]].forEach(function (a) { door(a[0], a[1], a[2], 32, '#222'); });
door(1389.8, 1328, 32.4, 32.3, '#333'); door(1454.6, 1328, -32.4, 32.3, '#333');
P('M2358.600 815V1390M1092.500 840V965', '#888', 1, 'stroke-dasharray="44 11 11 11"');

// Placed planning blocks
out += '<rect x="1094" y="810" width="220" height="162" fill="#f8ae80" opacity=".62"/><rect x="2189.300" y="811.700" width="166" height="432" fill="#7edfb3" opacity=".62"/>';
// Expand toggle
out += '<rect x="1376" y="1550" width="38" height="36" fill="#c0c0c0"/><path d="M1384 1564l11 11 11-11" fill="none" stroke="#000" stroke-width="3.500"/>';
document.getElementById('plan').innerHTML = out;
</script>
</body>
</html>
